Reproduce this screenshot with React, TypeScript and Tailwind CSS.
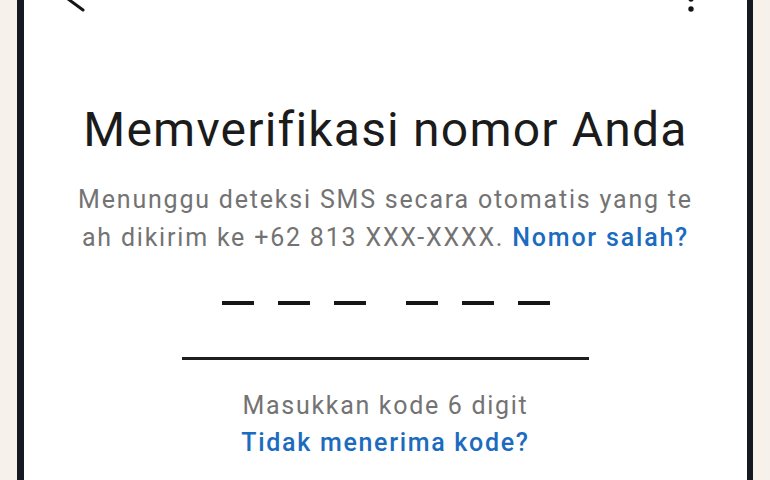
export default function App() {
  return (
    <div
      className="flex h-[480px] w-[770px] overflow-hidden bg-[#f6f2eb]"
      style={{ fontFamily: 'Roboto, "Noto Sans", sans-serif' }}
    >
      <div className="w-[17px] shrink-0" />
      <div className="w-[7px] shrink-0 bg-[#141a1f]" />

      <main className="flex flex-1 flex-col items-center bg-white">
        {/* app bar, mostly scrolled off the top */}
        <div className="flex h-[12px] w-full justify-between">
          <svg width="40" height="12" viewBox="0 0 40 12" className="ml-[36px] overflow-visible">
            <path d="M4 -4 L36 -4 M4 -4 L23 10 M4 -4 L23 -18" fill="none" stroke="#161616" strokeWidth="3" strokeLinecap="round" />
          </svg>
          <svg width="12" height="12" viewBox="0 0 12 12" className="mr-[50px] overflow-visible">
            <circle cx="6" cy="-1" r="2.7" fill="#141414" />
            <circle cx="6" cy="9" r="2.7" fill="#141414" />
          </svg>
        </div>

        <h1 className="mt-[90px] text-[48px] leading-[56px] tracking-[1.2px] text-[#1b1b1b]">Memverifikasi nomor Anda</h1>

        <div className="mt-[23px] text-center text-[25px] leading-[38px] tracking-[1.8px] text-[#737373]">
          <p>Menunggu deteksi SMS secara otomatis yang te</p>
          <p>
            ah dikirim ke +62 813 XXX-XXXX.{' '}
            <span className="font-medium text-[#1b6bbf]">Nomor salah?</span>
          </p>
        </div>

        {/* code slots */}
        <div className="mt-[44px] flex gap-[40px]">
          <div className="flex gap-[24px]">
            <div className="h-[4px] w-[32px] bg-[#161616]" />
            <div className="h-[4px] w-[32px] bg-[#161616]" />
            <div className="h-[4px] w-[32px] bg-[#161616]" />
          </div>
          <div className="flex gap-[24px]">
            <div className="h-[4px] w-[32px] bg-[#161616]" />
            <div className="h-[4px] w-[32px] bg-[#161616]" />
            <div className="h-[4px] w-[32px] bg-[#161616]" />
          </div>
        </div>

        <div className="mt-[52px] h-[3px] w-[407px] bg-[#1e1e1e]" />

        <div className="mt-[27px] text-center text-[25px] leading-[37px] tracking-[1.7px]">
          <p className="text-[#737373]">Masukkan kode 6 digit</p>
          <p className="font-medium text-[#1b6bbf]">Tidak menerima kode?</p>
        </div>
      </main>

      <div className="w-[6px] shrink-0 bg-[#141a1f]" />
      <div className="w-[17px] shrink-0" />
    </div>
  )
}
